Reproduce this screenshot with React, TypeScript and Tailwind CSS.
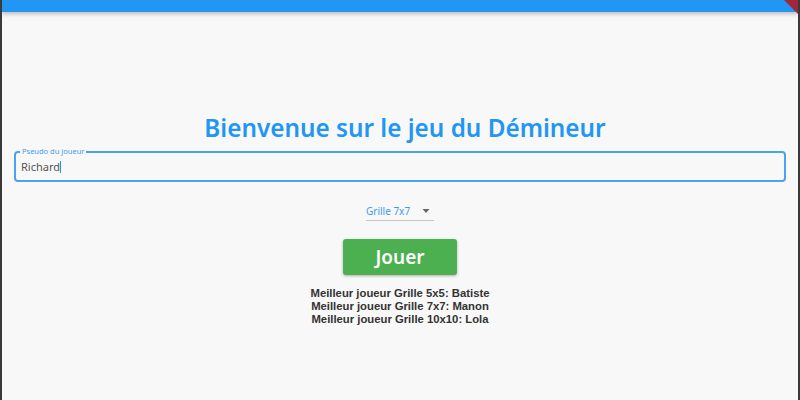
import React from 'react';

export default function App() {
  const best = [
    { grid: '5x5', name: 'Batiste' },
    { grid: '7x7', name: 'Manon' },
    { grid: '10x10', name: 'Lola' },
  ];

  return (
    <div className="relative w-[800px] h-[400px] overflow-hidden bg-[#f8f8f8] border-l-2 border-r-2 border-[#3a3a3a] font-['Noto_Sans',sans-serif]">
      {/* app bar strip */}
      <div className="h-[12px] bg-[#2196f3] shadow-[0_2px_4px_rgba(0,0,0,0.25)]" />

      {/* debug banner corner */}
      <div className="absolute top-0 right-0 w-0 h-0 border-t-[14px] border-l-[14px] border-t-[#a3263a] border-l-transparent" />

      <div className="flex flex-col items-center pt-[100px]">
        <h1 className="ml-[10px] text-[24.3px] leading-[32px] font-semibold text-[#2196f3]">
          Bienvenue sur le jeu du Démineur
        </h1>

        {/* pseudo field */}
        <div className="relative self-stretch mx-[12px] mt-[7px] h-[31px] border-2 border-[#4aa3f2] rounded-[4px] px-[5px] flex items-center">
          <span className="absolute -top-[6px] left-[4px] px-[2px] bg-[#f8f8f8] text-[7.5px] leading-[9px] text-[#3d9bef]">
            Pseudo du joueur
          </span>
          <span className="text-[11px] leading-[14px] text-[#555555] mt-[1px]">Richard</span>
          <span className="w-[1px] h-[12px] bg-[#2196f3] mt-[1px]" />
        </div>

        {/* grid select */}
        <div className="mt-[22px] w-[68px] flex items-center justify-between border-b border-[#c8c8c8] pb-[2px]">
          <span className="text-[10px] leading-[14px] text-[#3d9bef]">Grille 7x7</span>
          <svg width="8" height="5" viewBox="0 0 8 5" className="mr-[4px]">
            <path d="M0.5 0 L7.5 0 L4 4 Z" fill="#666666" />
          </svg>
        </div>

        {/* play button */}
        <button className="mt-[18px] w-[114px] h-[36px] rounded-[3px] bg-[#4caf50] shadow-[0_1px_3px_rgba(0,0,0,0.3)] text-white text-[19px] font-semibold">
          Jouer
        </button>

        <div className="mt-[12px] flex flex-col items-center text-[11.3px] leading-[13px] font-bold text-[#333333] font-['Liberation_Sans',sans-serif]">
          {best.map((b) => (
            <div key={b.grid}>
              Meilleur joueur Grille {b.grid}: {b.name}
            </div>
          ))}
        </div>
      </div>
    </div>
  );
}
